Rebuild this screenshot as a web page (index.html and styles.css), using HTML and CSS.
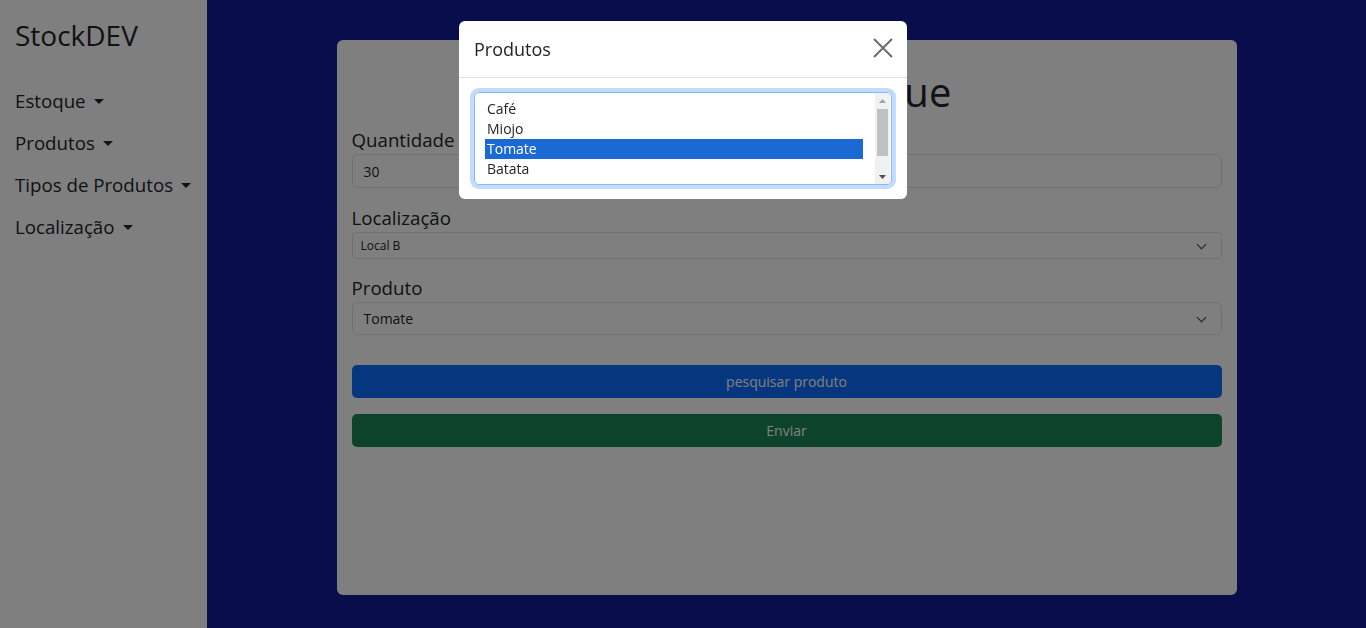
FILE: index.html
```html
<!DOCTYPE html>
<html lang="pt-BR">
<head>
<meta charset="utf-8">
<title>StockDEV</title>
<link rel="stylesheet" href="styles.css">
</head>
<body>
<div class="layout">
  <aside class="sidebar">
    <div class="brand">StockDEV</div>
    <nav class="nav">
      <a class="nav-link dropdown-toggle">Estoque</a>
      <a class="nav-link dropdown-toggle">Produtos</a>
      <a class="nav-link dropdown-toggle">Tipos de Produtos</a>
      <a class="nav-link dropdown-toggle">Localização</a>
    </nav>
  </aside>
  <main class="main">
    <section class="card">
      <h1 class="card-title">Adicionar Estoque</h1>
      <label class="form-label">Quantidade</label>
      <div class="form-control">30</div>
      <label class="form-label gap-a">Localização</label>
      <div class="form-select form-select-sm">Local B<span class="chev"></span></div>
      <label class="form-label gap-b">Produto</label>
      <div class="form-select">Tomate<span class="chev"></span></div>
      <button class="btn btn-primary first">pesquisar produto</button>
      <button class="btn btn-success">Enviar</button>
    </section>
  </main>
</div>
<div class="backdrop"></div>
<div class="modal">
  <div class="modal-header">
    <h5 class="modal-title">Produtos</h5>
    <span class="btn-close">
      <svg viewBox="0 0 20 20" width="20" height="20"><path d="M1 1L19 19M19 1L1 19" stroke="#6c6c6c" stroke-width="2" fill="none"/></svg>
    </span>
  </div>
  <div class="modal-body">
    <div class="listbox">
      <div class="list">
        <div class="option">Café</div>
        <div class="option">Miojo</div>
        <div class="option selected">Tomate</div>
        <div class="option">Batata</div>
        <div class="option">Cenoura</div>
      </div>
      <div class="scrollbar">
        <div class="sb-btn"><svg width="7" height="4" viewBox="0 0 7 4"><path d="M0 4L3.5 0L7 4Z" fill="#a3a3a3"/></svg></div>
        <div class="sb-track"><div class="sb-thumb"></div></div>
        <div class="sb-btn"><svg width="7" height="4" viewBox="0 0 7 4"><path d="M0 0L3.5 4L7 0Z" fill="#505050"/></svg></div>
      </div>
    </div>
  </div>
</div>
</body>
</html>
```
FILE: styles.css
```css
* { box-sizing: border-box; }
html, body { margin: 0; height: 100%; }
body {
  font-family: "Open Sans", "Liberation Sans", sans-serif;
  color: #212529;
  background: #141a96;
  overflow: hidden;
}
.layout { display: flex; height: 628px; }
.sidebar {
  width: 207px;
  flex: none;
  background: #fff;
  padding: 14px 0 0 15px;
}
.brand { font-size: 28px; line-height: 42px; color: #212529; }
.nav { display: flex; flex-direction: column; margin-top: 24px; }
.nav-link { font-size: 18.7px; line-height: 42px; color: #212529; white-space: nowrap; }
.dropdown-toggle::after {
  content: "";
  display: inline-block;
  margin-left: 8px;
  vertical-align: 4px;
  border-top: 5.5px solid;
  border-left: 5px solid transparent;
  border-right: 5px solid transparent;
}
.main {
  flex: 1;
  background: #141a96;
  display: flex;
  justify-content: center;
  padding-top: 40px;
}
.card {
  width: 900px;
  height: 555px;
  background: #fff;
  border-radius: 6px;
  padding: 28px 15px;
  display: flex;
  flex-direction: column;
}
.card-title {
  margin: 0 0 10px;
  font-size: 40px;
  line-height: 48px;
  font-weight: 400;
  text-align: center;
  padding-right: 8px;
}
.form-label { font-size: 18.7px; line-height: 28px; }
.form-label.gap-a { margin-top: 16px; }
.form-label.gap-b { margin-top: 15px; }
.form-control, .form-select {
  border: 1px solid #dee2e6;
  border-radius: 6px;
  font-size: 14px;
  padding: 0 11px;
  display: flex;
  align-items: center;
  height: 34px;
  position: relative;
}
.form-select { height: 33px; }
.form-select-sm { height: 27px; font-size: 12px; padding-left: 8px; border-radius: 4px; }
.chev {
  position: absolute;
  right: 16px;
  top: 50%;
  width: 7px;
  height: 7px;
  margin-top: -5px;
  border-right: 1.6px solid #343a40;
  border-bottom: 1.6px solid #343a40;
  transform: rotate(45deg);
}
.btn {
  height: 33px;
  border: 0;
  border-radius: 5px;
  color: #fff;
  font-family: inherit;
  font-size: 14px;
}
.btn.first { margin-top: 30px; }
.btn-primary { background: #0d6efd; }
.btn-success { background: #198754; margin-top: 16px; }
.backdrop {
  position: fixed;
  inset: 0;
  background: rgba(0, 0, 0, 0.5);
}
.modal {
  position: fixed;
  top: 21px;
  left: 459px;
  width: 448px;
  background: #fff;
  border-radius: 6px;
  overflow: hidden;
}
.modal-header {
  height: 57px;
  display: flex;
  align-items: center;
  justify-content: space-between;
  padding: 0 14px 0 15px;
  border-bottom: 1px solid #dee2e6;
}
.modal-title { margin: 0; font-size: 18px; font-weight: 400; color: #212529; }
.btn-close { display: flex; width: 20px; height: 20px; margin-top: -2px; }
.modal-body { padding: 14px 15px; }
.listbox {
  height: 93px;
  border: 1px solid #86b7fe;
  border-radius: 5px;
  box-shadow: 0 0 0 4px rgba(13, 110, 253, 0.25);
  display: flex;
  overflow: hidden;
  font-size: 14px;
  color: #212529;
}
.list {
  flex: 1;
  overflow: hidden;
  padding: 6px 12px 0 10px;
}
.option { line-height: 19px; height: 20px; padding-left: 2px; white-space: nowrap; }
.option.selected { background: #1a69d4; color: #fff; }
.scrollbar {
  width: 15px;
  flex: none;
  margin-right: 1px;
  background: #f1f1f1;
  display: flex;
  flex-direction: column;
}
.sb-btn {
  height: 15px;
  flex: none;
  display: flex;
  align-items: center;
  justify-content: center;
}
.sb-track { flex: 1; padding: 1px 2px 0; }
.sb-thumb { height: 47px; background: #c1c1c1; }
```
